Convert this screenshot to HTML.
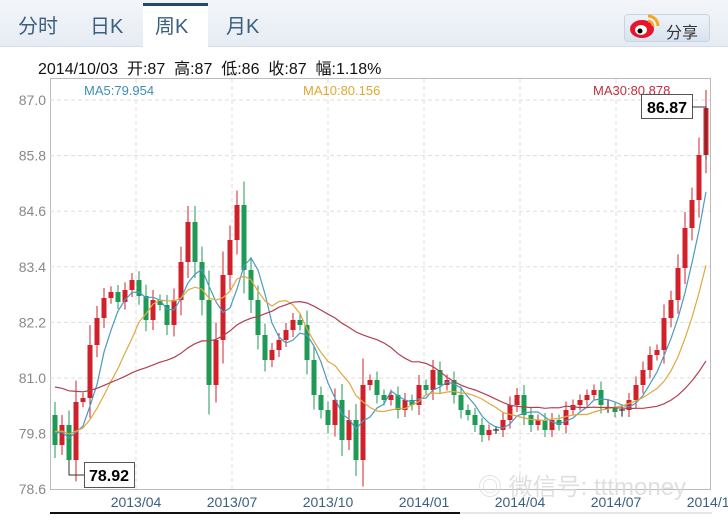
<!DOCTYPE html>
<html><head><meta charset="utf-8"><style>
body{margin:0;width:728px;height:521px;background:#fff;font-family:"Liberation Sans","Noto Sans CJK SC",sans-serif;overflow:hidden;position:relative}
.bar{position:absolute;left:0;top:0;width:728px;height:46px;background:linear-gradient(#f3f6fa,#e6ecf3);border-bottom:1px solid #d5dde6}
.tab{position:absolute;top:10px;font-size:20px;color:#3a5f80}
.act{position:absolute;left:143px;top:3px;width:65px;height:44px;background:#fff;border-top:3px solid #244a69;box-sizing:border-box}
.share{position:absolute;left:624px;top:14px;width:86px;height:28px;border-radius:4px;background:linear-gradient(#eef3f9,#d8e3ef);border:1px solid #c8d4e2;box-sizing:border-box}
.info{position:absolute;left:38px;top:55px;font-size:16px;color:#111}
</style></head><body>
<div class="bar"></div>
<div class="act"></div>
<div class="tab" style="left:18px">分时</div>
<div class="tab" style="left:90px">日K</div>
<div class="tab" style="left:155px">周K</div>
<div class="tab" style="left:226px">月K</div>
<div class="share"></div>
<svg style="position:absolute;left:628px;top:10px" width="36" height="32"><ellipse cx="14" cy="19" rx="12" ry="9" fill="#e6162d"/><ellipse cx="13" cy="20" rx="6" ry="5" fill="#fff"/><circle cx="12" cy="21" r="2.5" fill="#000"/><path d="M20 6 a10 10 0 0 1 10 10" stroke="#f5a623" stroke-width="3" fill="none"/><path d="M20 11 a5 5 0 0 1 5 5" stroke="#f5a623" stroke-width="2.5" fill="none"/></svg>
<div style="position:absolute;left:666px;top:19px;font-size:16px;color:#333">分享</div>
<div class="info">2014/10/03 &nbsp;开:87 &nbsp;高:87 &nbsp;低:86 &nbsp;收:87 &nbsp;幅:1.18%</div>
<svg id="c" style="position:absolute;left:0;top:0" width="728" height="521"></svg>
<script>
var s='';
s+='<rect x="50.5" y="78.5" width="660" height="411" fill="none" stroke="#bbb"/>';
var labs=['87.0','85.8','84.6','83.4','82.2','81.0','79.8','78.6'];
for(var k=0;k<8;k++){var y=100+k*55.6;if(k<7)s+='<line x1="50" x2="710" y1="'+y+'" y2="'+y+'" stroke="#ddd" stroke-dasharray="4,3"/>';s+='<text x="46" y="'+(y+5)+'" font-size="14" fill="#888" text-anchor="end" font-family="Liberation Sans">'+labs[k]+'</text>';}
var dx=[136,232,328,424,520,616,712],dl=['2013/04','2013/07','2013/10','2014/01','2014/04','2014/07','2014/10'];
for(k=0;k<7;k++){if(k<6)s+='<line x1="'+dx[k]+'" x2="'+dx[k]+'" y1="79" y2="489" stroke="#ddd" stroke-dasharray="4,3"/>';s+='<text x="'+dx[k]+'" y="507" font-size="14" fill="#3a5f7f" text-anchor="middle" font-family="Liberation Sans">'+dl[k]+'</text>';}
s+='<line x1="50" x2="460" y1="513" y2="513" stroke="#111" stroke-width="2"/><line x1="460" x2="712" y1="513" y2="513" stroke="#ccc"/>';
var c=[445,425,460,402,398,345,318,298,292,302,290,280,296,320,300,305,325,300,262,222,262,300,385,340,275,240,205,270,300,335,360,350,340,330,320,325,360,395,410,425,400,440,420,460,385,380,395,400,395,410,400,405,385,390,370,385,380,395,410,415,425,435,430,430,420,405,395,415,425,420,430,420,425,410,405,400,395,390,405,408,412,410,400,385,370,355,350,318,300,268,228,200,155,108];
function ma(n,col,pad){var e=[];for(var q=0;q<n;q++)e.push(pad);e=e.concat(c);var p='';for(var i=0;i<c.length;i++){var a=0;for(var j=i+1;j<=i+n;j++)a+=e[j];p+=(55+7*i)+','+(a/n).toFixed(1)+' ';}s+='<polyline points="'+p+'" fill="none" stroke="'+col+'" stroke-width="1.2"/>';}
for(var i=0;i<c.length;i++){var x=55+7*i,o=(i==0?415:c[i-1]),cl=c[i];var d=Math.abs(o-cl);var t=Math.min(o,cl)-(4+d*0.3),b=Math.max(o,cl)+(4+d*0.3);
var col=d<4?'#111':(cl<o?'#d0202a':'#1e9a55');
s+='<line x1="'+x+'" x2="'+x+'" y1="'+t+'" y2="'+b+'" stroke="'+col+'"/>';
if(d<4)s+='<line x1="'+(x-3)+'" x2="'+(x+3)+'" y1="'+cl+'" y2="'+cl+'" stroke="#111"/>';else s+='<rect x="'+(x-2.5)+'" y="'+Math.min(o,cl)+'" width="5" height="'+d+'" fill="'+col+'"/>';}
ma(5,'#4a9ac0',430);ma(10,'#e0a840',430);ma(30,'#b04050',385);
s+='<text x="84" y="95" font-size="13" fill="#3c8fb3" font-family="Liberation Sans">MA5:79.954</text>';
s+='<text x="303" y="95" font-size="13" fill="#e0a830" font-family="Liberation Sans">MA10:80.156</text>';
s+='<text x="593" y="95" font-size="13" fill="#c03040" font-family="Liberation Sans">MA30:80.878</text>';
s+='<rect x="641.5" y="94.5" width="51" height="24" fill="#fff" stroke="#555"/><text x="667" y="113" font-size="16" font-weight="bold" text-anchor="middle" font-family="Liberation Sans">86.87</text><polyline points="692,107 706,107 706,160" fill="none" stroke="#333"/>';
s+='<rect x="84.5" y="462.5" width="50" height="25" fill="#fff" stroke="#555"/><text x="109" y="481" font-size="16" font-weight="bold" text-anchor="middle" font-family="Liberation Sans">78.92</text><polyline points="69,460 69,475 84,475" fill="none" stroke="#333"/>';
s+='<text x="478" y="495" font-size="24" fill="#d8d8d8" opacity="0.8" font-family="Liberation Sans,Noto Sans CJK SC,sans-serif">◎ 微信号: tttmoney</text>';
document.getElementById('c').innerHTML=s;
</script>
</body></html>
